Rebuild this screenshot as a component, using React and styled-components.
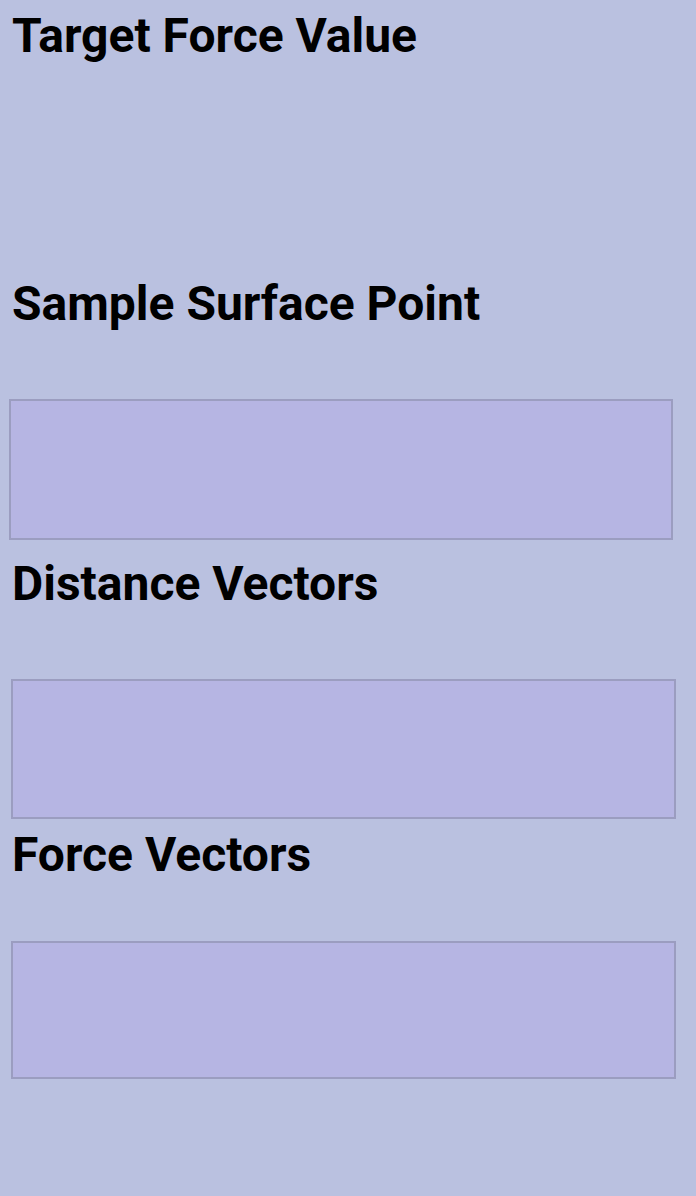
import React from 'react'
import styled , { createGlobalStyle } from "styled-components";

const GlobalStyle = createGlobalStyle`
     html , body {
          margin     : 0;
          padding    : 0;
          background : #bac1e0;
     }
     body {
          font-family : Roboto, "Noto Sans", sans-serif;
          color       : #000;
     }
`

// each input panel sits under its heading; spacing differs a little per section
const panels = [
     { title : "Sample Surface Point" , above : 0 , below : 67 , height : 141 , left : 9 , right : 23 } ,
     { title : "Distance Vectors" , above : 16 , below : 67 , height : 140 , left : 11 , right : 20 } ,
     { title : "Force Vectors" , above : 8 , below : 58 , height : 138 , left : 11 , right : 20 } ,
]

function App() {
     return (
          <>
               <GlobalStyle />
               <Page>
                    <TopSection>
                         <Heading>Target Force Value</Heading>
                    </TopSection>
                    {
                         panels.map( ( p , i ) => (
                              <Section key={i} $above={ p.above }>
                                   <Heading>{ p.title }</Heading>
                                   <Field
                                        $below={ p.below }
                                        $height={ p.height }
                                        $left={ p.left }
                                        $right={ p.right } />
                              </Section>
                         ) )
                    }
               </Page>
          </>
     );
}

export default App;

const Page = styled.main`
     display        : flex;
     flex-direction : column;
     width          : 696px;
     min-height     : 1196px;
     padding-top    : 8px;
     box-sizing     : border-box;
`

const TopSection = styled.section`
     display        : flex;
     flex-direction : column;
     height         : 268px;
`

const Section = styled.section`
     display        : flex;
     flex-direction : column;
     margin-top     : ${ p => p.$above }px;
`

const Heading = styled.h2`
     margin      : 0 0 0 12px;
     font-size   : 48px;
     font-weight : 700;
     line-height : 56px;
`

const Field = styled.div`
     margin     : ${ p => p.$below }px ${ p => p.$right }px 0 ${ p => p.$left }px;
     height     : ${ p => p.$height }px;
     box-sizing : border-box;
     background : #b6b5e3;
     border     : 2px solid #9b9dc0;
`
